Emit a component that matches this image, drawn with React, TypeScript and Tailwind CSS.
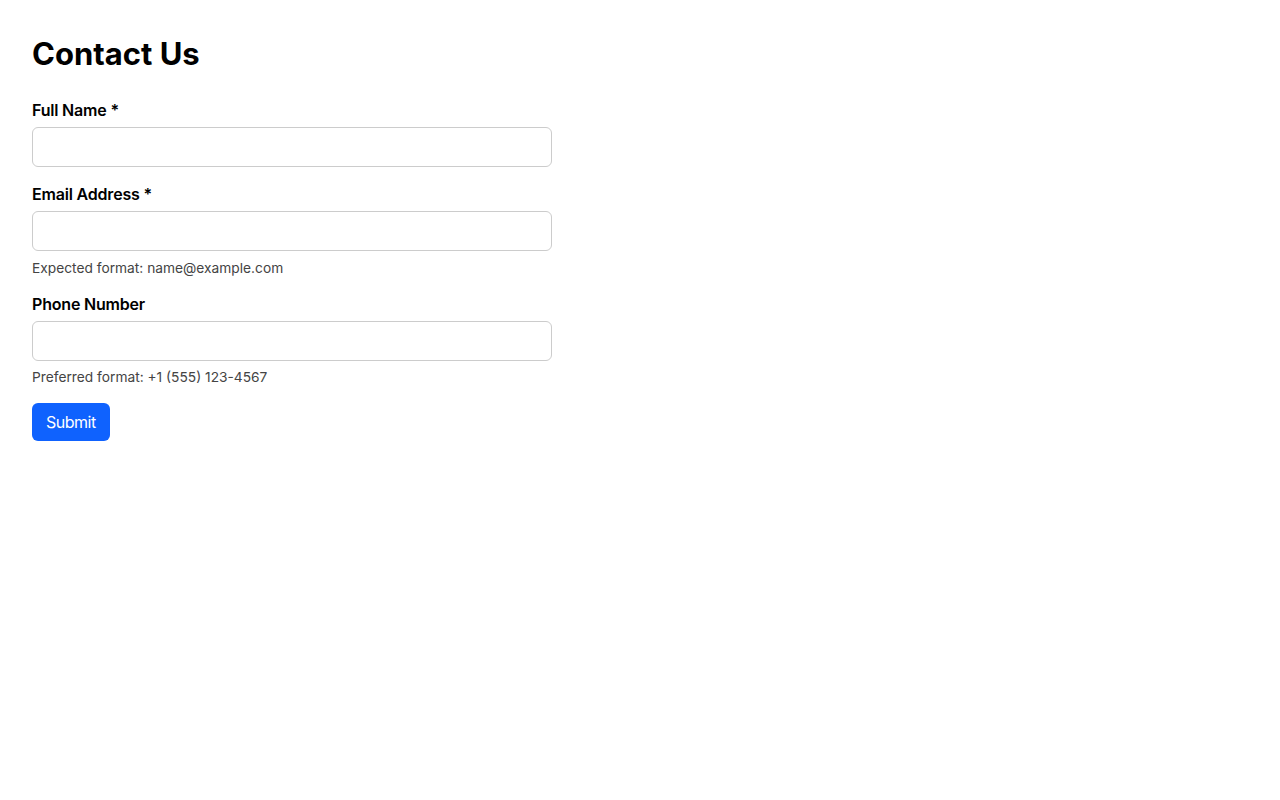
import React from "react";

function Field({ label, hint, type = "text" }: { label: string; hint?: string; type?: string }) {
  return (
    <div className="flex flex-col">
      <label className="mb-[5px] block text-[16px] leading-6 font-semibold tracking-[-0.012em] text-black">{label}</label>
      <input
        type={type}
        className="h-10 w-[520px] rounded-md border border-[#cccccc] bg-white px-3 text-[16px] outline-none"
      />
      {hint && <p className="mt-[7.5px] text-[13.75px] leading-[18px] text-[#444444]">{hint}</p>}
    </div>
  );
}

export default function App() {
  return (
    <div className="min-h-screen bg-white px-8 pt-9 text-black" style={{ fontFamily: "Inter, 'Noto Sans', sans-serif" }}>
      <h1 className="mb-[26px] text-[31px] leading-9 font-bold">Contact Us</h1>
      <form className="flex flex-col gap-[15px]" onSubmit={(e) => e.preventDefault()}>
        <Field label="Full Name *" />
        <Field label="Email Address *" type="email" hint="Expected format: name@example.com" />
        <Field label="Phone Number" type="tel" hint="Preferred format: +1 (555) 123-4567" />
        <div className="pt-[2px]">
          <button
            type="submit"
            className="h-[38px] rounded-md bg-[#0f62fe] px-[14px] text-[16px] leading-6 tracking-[-0.03em] text-white"
          >
            Submit
          </button>
        </div>
      </form>
    </div>
  );
}
